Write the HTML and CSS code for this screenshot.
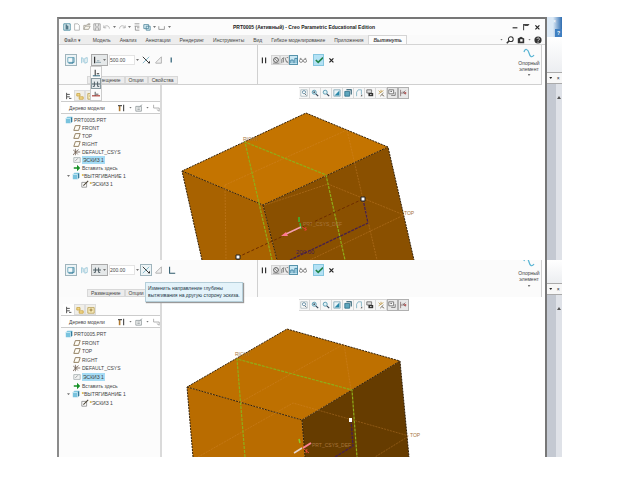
FILE: index.html
```html
<!DOCTYPE html>
<html lang="ru">
<head>
<meta charset="utf-8">
<title>Creo Parametric</title>
<link rel="stylesheet" href="styles.css">
</head>
<body>
<svg class="defs" aria-hidden="true">
  <symbol id="solid" viewBox="0 0 10 10"><path d="M1 2h8v6H1z" fill="#f4fafc" stroke="#5b9bb3"/><path d="M7.5 2v7H2" fill="none" stroke="#216f91"/></symbol>
  <symbol id="surface" viewBox="0 0 10 10"><path d="M2 2v7M2 2l2 1v5M6 3l3-1v6l-3 1z" fill="none" stroke="#8cc0d4"/></symbol>
  <symbol id="blind" viewBox="0 0 10 10"><path d="M2 1v8" stroke="#333" stroke-width="1.5"/><path d="M3 8h7M5 6h3" stroke="#7f9ba5"/></symbol>
  <symbol id="sym" viewBox="0 0 10 10"><path d="M0 5h10M3 2v6M7 2v6M1 8h2M7 8h2" fill="none" stroke="#4c5c63" stroke-width="1.2"/></symbol>
  <symbol id="onebase" viewBox="0 0 10 10"><path d="M1 8.500h9" stroke="#356f85" stroke-width="1.300"/><path d="M4 1v7M6 6h3" stroke="#333" stroke-width="1.300"/></symbol>
  <symbol id="tosel" viewBox="0 0 10 10"><path d="M0 6h10" stroke="#b0413a" stroke-width="1.500"/><path d="M4 1v5M5 4h3" stroke="#555" stroke-width="1.200"/></symbol>
  <symbol id="flip" viewBox="0 0 10 10"><path d="M1 1l8 8" stroke="#333" stroke-width="1.200"/><path d="M1 9l8-8" stroke="#6fa9bd"/><path d="M7 9h3V6z" fill="#333"/></symbol>
  <symbol id="cut" viewBox="0 0 10 10"><path d="M1 8L8 1v8H1z" fill="#f0f0f0" stroke="#a4a4a4"/></symbol>
  <symbol id="bar" viewBox="0 0 10 10"><path d="M4 2v6" stroke="#285c73" stroke-width="1.500"/></symbol>
  <symbol id="corner" viewBox="0 0 10 10"><path d="M2 1v8h7" fill="none" stroke="#2e596b" stroke-width="1.300"/></symbol>
  <symbol id="pause" viewBox="0 0 10 10"><path d="M3 2v7M7 2v7" stroke="#333" stroke-width="1.500"/></symbol>
  <symbol id="noprev" viewBox="0 0 10 10"><circle cx="5" cy="5" r="3" fill="none" stroke="#555" stroke-width="1.200"/><path d="M3 3l4 4M1 9h8" stroke="#777"/></symbol>
  <symbol id="hatch" viewBox="0 0 10 10"><path d="M1 9V4l2-2v6M5 2l2 6M7 2h2M7 6l2 3" fill="none" stroke="#777" stroke-width="1.100"/></symbol>
  <symbol id="attach" viewBox="0 0 10 10"><path d="M1 9V5h3v4M6 9V3h3v6" fill="#b8deee" stroke="#2b7698"/></symbol>
  <symbol id="glasses" viewBox="0 0 10 10"><circle cx="2.500" cy="6" r="2" fill="none" stroke="#777"/><circle cx="7.500" cy="6" r="2" fill="none" stroke="#777"/><path d="M1 3h2M7 3h2" stroke="#777"/></symbol>
  <symbol id="check" viewBox="0 0 10 10"><path d="M1 5l3 3 6-6" fill="none" stroke="#20844a" stroke-width="2"/></symbol>
  <symbol id="cross" viewBox="0 0 10 10"><path d="M3 3l5 5M8 3L3 8" stroke="#222" stroke-width="1.500"/></symbol>
  <symbol id="zoomfit" viewBox="0 0 10 10"><path d="M1 1h8v8H1z" fill="#fff" stroke="#a6b5bb"/><circle cx="5" cy="4" r="2" fill="none" stroke="#55839a"/><path d="M6 6l2 2" stroke="#555"/></symbol>
  <symbol id="zoomin" viewBox="0 0 10 10"><circle cx="4" cy="4" r="2.500" fill="#dff2f7" stroke="#438ca6"/><path d="M3 4h2M4 3v2" stroke="#234"/><path d="M6 6l3 3" stroke="#345" stroke-width="1.500"/></symbol>
  <symbol id="zoomout" viewBox="0 0 10 10"><circle cx="4" cy="4" r="2.500" fill="#dff2f7" stroke="#438ca6"/><path d="M6 6l3 3" stroke="#345" stroke-width="1.500"/></symbol>
  <symbol id="repaint" viewBox="0 0 10 10"><path d="M1 1h8v8H1z" fill="#e8f4f8" stroke="#7fa6b5"/><path d="M8 2v6H2z" fill="#2a87a8"/></symbol>
  <symbol id="shade" viewBox="0 0 10 10"><path d="M1 3h6v6H1z" fill="#5fa6bd" stroke="#276c86"/><path d="M3 1h6v6" fill="none" stroke="#174d63" stroke-width="1.300"/></symbol>
  <symbol id="saved" viewBox="0 0 10 10"><path d="M2 9V4l2-3h4v6" fill="none" stroke="#74aabd"/><path d="M7 9h2V7z" fill="#333"/></symbol>
  <symbol id="views" viewBox="0 0 10 10"><path d="M1 1h6v4H1z" fill="#ddd" stroke="#666"/><path d="M3 5h6v4H3z" fill="#333"/><path d="M5 7h2" stroke="#fff"/></symbol>
  <symbol id="datum" viewBox="0 0 10 10"><path d="M2 2l2 2M5 1v3M2 6l6-4" stroke="#bd953f"/><path d="M4 9l4-4M6 7l3 2" stroke="#655b49"/></symbol>
  <symbol id="annot" viewBox="0 0 10 10"><path d="M1 1h6v5H1zM4 8h5V4" fill="#f5f5f5" stroke="#666"/><path d="M3 3h2" stroke="#444"/></symbol>
  <symbol id="spin" viewBox="0 0 10 10"><path d="M2 1v8M2 5h6M5 3l3 4M8 2L5 5" fill="none" stroke="#806a6a"/><path d="M7 4h2v2H7z" fill="#b44"/></symbol>
  <symbol id="part" viewBox="0 0 10 10"><path d="M1 3l2-2h6v6L7 9H1z" fill="#79c3de"/><path d="M7 3l2-2v6L7 9z" fill="#286f90"/><path d="M1 3h6v6" fill="none" stroke="#d8f2fa"/></symbol>
  <symbol id="plane" viewBox="0 0 10 10"><path d="M3 2h6L7 8H1z" fill="#fffdf6" stroke="#7c6642"/></symbol>
  <symbol id="csys" viewBox="0 0 10 10"><path d="M3 1v8M3 5h6M0 2l6 6M0 9l3-4 4-3" fill="none" stroke="#705e50"/></symbol>
  <symbol id="sketch" viewBox="0 0 10 10"><path d="M1 2h8v6H1z" fill="#f2f4f4" stroke="#a5adaf"/><path d="M3 6l3-3" stroke="#888"/></symbol>
  <symbol id="insert" viewBox="0 0 10 10"><path d="M1 4h4V1l4 4-4 4V6H1z" fill="#159025"/></symbol>
  <symbol id="pencil" viewBox="0 0 10 10"><path d="M1 3h6v6H1z" fill="#fff" stroke="#888"/><path d="M3 7l6-6" stroke="#4a4233" stroke-width="1.300"/></symbol>
  <symbol id="tree" viewBox="0 0 10 10"><path d="M2 1v8M2 3h4M2 6h4M5 8h3" fill="none" stroke="#555" stroke-width="1.200"/></symbol>
  <symbol id="folder" viewBox="0 0 10 10"><path d="M1 2h4v3H1zM4 6h5v3H4z" fill="#f5dc8b" stroke="#c5a042"/></symbol>
  <symbol id="star" viewBox="0 0 10 10"><path d="M1 2h8v7H1z" fill="#f9edbd" stroke="#b59c55"/><path d="M5 3v4M3 5h4" stroke="#8d702b"/></symbol>
  <symbol id="tools" viewBox="0 0 10 10"><path d="M2 2v7" stroke="#b07a31" stroke-width="2"/><path d="M0 2h5M7 1v8" stroke="#555" stroke-width="1.500"/></symbol>
  <symbol id="list" viewBox="0 0 10 10"><path d="M1 3h7v6H1zM3 5h3M3 7h3M6 3l3-2" fill="#f3f5f5" stroke="#8f9799"/></symbol>
  <symbol id="filter" viewBox="0 0 10 10"><path d="M2 1v4h3M5 5h4v4M6 7l3 2" fill="none" stroke="#a0a0a0"/></symbol>
  <symbol id="page" viewBox="0 0 10 10"><path d="M2 1h4l2 2v6H2z" fill="#fff" stroke="#aaa"/></symbol>
  <symbol id="open" viewBox="0 0 10 10"><path d="M1 8V3h3l1-1h4M1 8h6l2-4H3zM6 1h3" fill="#f7f3e8" stroke="#9e9a90"/></symbol>
  <symbol id="save" viewBox="0 0 10 10"><path d="M1 1h8v8H1zM3 1v3h4V1M3 9V6h4v3" fill="#f4f4f4" stroke="#999"/></symbol>
  <symbol id="undo" viewBox="0 0 10 10"><path d="M1 3v3h3M1 6c2-4 7-3 7 1" fill="none" stroke="#aaa"/></symbol>
  <symbol id="redo" viewBox="0 0 10 10"><path d="M9 3v3H6M9 6C7 2 2 3 2 7" fill="none" stroke="#aaa"/></symbol>
  <symbol id="regen" viewBox="0 0 10 10"><path d="M2 1h6M2 4h6M3 4v5h5M5 6h3" fill="none" stroke="#888"/></symbol>
  <symbol id="windows" viewBox="0 0 10 10"><path d="M1 2h6v5H1zM4 4h5v5H4z" fill="#d8eef5" stroke="#50859a"/></symbol>
  <symbol id="box" viewBox="0 0 10 10"><path d="M1 4v4h7V4" fill="none" stroke="#888"/></symbol>
  <symbol id="min" viewBox="0 0 10 10"><path d="M2 6h6" stroke="#333" stroke-width="1.500"/></symbol>
  <symbol id="max" viewBox="0 0 10 10"><path d="M2 9V2h7M3 3h5" fill="none" stroke="#444" stroke-width="1.300"/></symbol>
  <symbol id="search" viewBox="0 0 10 10"><circle cx="6" cy="4" r="3" fill="#fff" stroke="#333" stroke-width="1.300"/><path d="M4 6L1 9" stroke="#333" stroke-width="2"/></symbol>
  <symbol id="learn" viewBox="0 0 10 10"><path d="M1 3l4-2 4 2v6H1z" fill="#333"/><path d="M4 4h3v3H4z" fill="#fff"/></symbol>
  <symbol id="help" viewBox="0 0 10 10"><circle cx="5" cy="5" r="4.500" fill="#333"/><path d="M3.500 3.500c1-2 4-1 3 1L5 6M5 7v1.500" fill="none" stroke="#fff"/></symbol>
  <symbol id="logo" viewBox="0 0 10 10"><path d="M1 1h8v8H1z" fill="#eef8fa" stroke="#357d96"/><path d="M4 2v6M6 3v5" stroke="#2a596b" stroke-width="1.500"/></symbol>
</svg>
<main class="stage">
  <section class="capture">
    <div class="app app-top">
      <header class="titlebar">
        <svg class="ic"><use href="#logo"/></svg>
        <svg class="ic"><use href="#page"/></svg>
        <svg class="ic"><use href="#open"/></svg>
        <svg class="ic"><use href="#save"/></svg>
        <svg class="ic"><use href="#undo"/></svg><i class="caret"></i>
        <svg class="ic"><use href="#redo"/></svg><i class="caret"></i>
        <svg class="ic"><use href="#regen"/></svg>
        <svg class="ic"><use href="#windows"/></svg><i class="caret"></i>
        <svg class="ic"><use href="#box"/></svg><i class="caret"></i>
        <h1>PRT0005 (Активный) - Creo Parametric Educational Edition</h1>
        <div class="winbtns">
          <button aria-label="Свернуть"><svg class="ic"><use href="#min"/></svg></button>
          <button aria-label="Развернуть"><svg class="ic"><use href="#max"/></svg></button>
          <button aria-label="Закрыть"><svg class="ic"><use href="#cross"/></svg></button>
        </div>
      </header>
      <nav class="tabs">
        <a href="#" class="file">Файл ▾</a><a href="#">Модель</a><a href="#">Анализ</a><a href="#">Аннотации</a><a href="#">Рендеринг</a><a href="#">Инструменты</a><a href="#">Вид</a><a href="#">Гибкое моделирование</a><a href="#">Приложения</a><a href="#" class="active">Вытянуть</a>
        <div class="helpers">
          <i class="caret"></i>
          <svg class="ic"><use href="#search"/></svg>
          <svg class="ic"><use href="#learn"/></svg>
          <i class="caret"></i>
          <svg class="ic"><use href="#help"/></svg>
        </div>
      </nav>
      <div class="ribbon">
        <div class="settings">
          <div class="row">
            <button class="tool on" aria-label="Твердое тело"><svg class="ic"><use href="#solid"/></svg></button>
            <button class="tool" aria-label="Поверхность"><svg class="ic"><use href="#surface"/></svg></button>
            <button class="depth" aria-label="Глубина"><svg class="ic"><use href="#blind"/></svg><i class="caret"></i></button>
            <input class="value" aria-label="Значение глубины" value="500.00">
            <i class="caret"></i>
            <button class="tool" aria-label="Изменить направление"><svg class="ic"><use href="#flip"/></svg></button>
            <button class="tool" aria-label="Удалить материал"><svg class="ic"><use href="#cut"/></svg></button>
            <button class="tool" aria-label="Утолстить"><svg class="ic"><use href="#bar"/></svg></button>
            <div class="flyout">
              <button aria-label="На глубину"><svg class="ic"><use href="#onebase"/></svg></button>
              <button class="on" aria-label="Симметрично"><svg class="ic"><use href="#sym"/></svg></button>
              <button aria-label="До выбранного"><svg class="ic"><use href="#tosel"/></svg></button>
            </div>
          </div>
          <div class="panels"><button>Размещение</button><button>Опции</button><button>Свойства</button></div>
        </div>
        <div class="confirm">
          <button class="tool" aria-label="Пауза"><svg class="ic"><use href="#pause"/></svg></button>
          <div class="group">
            <button class="view" aria-label="Без просмотра"><svg class="ic"><use href="#noprev"/></svg></button>
            <button class="view" aria-label="Отдельно"><svg class="ic"><use href="#hatch"/></svg></button>
            <button class="view on" aria-label="Присоединено"><svg class="ic"><use href="#attach"/></svg></button>
            <button class="view plain" aria-label="Проверка"><svg class="ic"><use href="#glasses"/></svg></button>
          </div>
          <button class="ok" aria-label="Принять"><svg class="ic"><use href="#check"/></svg></button>
          <button class="tool" aria-label="Отмена"><svg class="ic"><use href="#cross"/></svg></button>
        </div>
        <button class="datum"><svg class="wave" viewBox="0 0 12 10"><path d="M1 4c1-4 4-3 5 1s3 5 5 2" fill="none" stroke="#58b4d3" stroke-width="1.200"/></svg><span>Опорный<br>элемент</span><i class="caret"></i></button>
      </div>
      <div class="work">
        <aside class="side">
          <div class="sidetabs"><button class="on" aria-label="Дерево"><svg class="ic"><use href="#tree"/></svg></button><button aria-label="Папки"><svg class="ic"><use href="#folder"/></svg></button><button aria-label="Избранное"><svg class="ic"><use href="#star"/></svg></button></div>
          <div class="treehead"><span>Дерево модели</span><svg class="ic"><use href="#tools"/></svg><i class="caret"></i><svg class="ic"><use href="#list"/></svg><i class="caret"></i><svg class="ic"><use href="#filter"/></svg></div>
          <ul class="tree">
            <li class="root"><svg class="ic"><use href="#part"/></svg><span>PRT0005.PRT</span></li>
            <li><svg class="ic"><use href="#plane"/></svg><span>FRONT</span></li>
            <li><svg class="ic"><use href="#plane"/></svg><span>TOP</span></li>
            <li><svg class="ic"><use href="#plane"/></svg><span>RIGHT</span></li>
            <li><svg class="ic"><use href="#csys"/></svg><span>DEFAULT_CSYS</span></li>
            <li><svg class="ic"><use href="#sketch"/></svg><span class="sel">ЭСКИЗ 1</span></li>
            <li><svg class="ic"><use href="#insert"/></svg><span>Вставить здесь</span></li>
            <li class="parent"><i class="caret"></i><svg class="ic"><use href="#part"/></svg><span><b>*</b>ВЫТЯГИВАНИЕ 1</span></li>
            <li class="leaf"><svg class="ic"><use href="#pencil"/></svg><span><b>*</b>ЭСКИЗ 1</span></li>
          </ul>
        </aside>
        <div class="canvas">
          <div class="viewbar">
            <button aria-label="Вписать"><svg class="ic"><use href="#zoomfit"/></svg></button><button aria-label="Увеличить"><svg class="ic"><use href="#zoomin"/></svg></button><button aria-label="Уменьшить"><svg class="ic"><use href="#zoomout"/></svg></button><button aria-label="Перерисовать"><svg class="ic"><use href="#repaint"/></svg></button><button aria-label="Стиль"><svg class="ic"><use href="#shade"/></svg></button><button aria-label="Ориентации"><svg class="ic"><use href="#saved"/></svg></button><button aria-label="Виды"><svg class="ic"><use href="#views"/></svg></button><button aria-label="Опорные элементы"><svg class="ic"><use href="#datum"/></svg></button><button class="on" aria-label="Аннотации"><svg class="ic"><use href="#annot"/></svg></button><button class="on" aria-label="Вращение"><svg class="ic"><use href="#spin"/></svg></button>
          </div>
          <svg class="model" viewBox="162 100 383 160">
            <path d="M182 171L263 205 277 260H202z" fill="#a86200"/>
            <path d="M263 205L388 147 414 260H277z" fill="#8a5000"/>
            <path d="M306 113L388 147 263 205 182 171z" fill="#c47400"/>
            <g class="edge"><path d="M202 260L182 171 306 113 388 147 414 260M182 171L263 205 388 147M263 205L277 260"/></g>
            <g class="faint"><path d="M225 185L347 130 377 260M225 185L226 260M265 205L328 184 404 215 310 260"/></g>
            <g class="green"><path d="M272 260L245 142 326 175 345 260"/></g>
            <path class="reddash" d="M363 199L238 257"/>
            <path class="purple" d="M363 199L368 223 290 260"/>
            <path d="M299 217v5M300 223l1 6" stroke="#38b935" stroke-width="1.500"/>
            <path d="M301 227L286 234" stroke="#f4a0ae" stroke-width="1.500"/><path d="M281 236l5-4 2 4z" fill="#ff7890"/>
            <path d="M302 227l5 3M305 231l1-4" stroke="#d8432f"/>
            <path d="M361 197h4v4h-4zM236 255h4v4h-4z" fill="#fff" stroke="#222"/>
            <path d="M238 259v1" stroke="#222"/>
            <text x="303" y="226" class="lb">PRT_CSYS_DEF</text>
            <text x="296" y="254" class="dim">200.00</text>
            <text x="243" y="141" class="lb">RIGHT</text>
            <text x="404" y="215" class="lb">TOP</text>
          </svg>
        </div>
      </div>
    </div>
    <div class="strip" aria-hidden="true">
      <div class="glass"><span>×</span><b>?</b></div>
      <div class="blank"></div>
      <div class="mini"><i class="caret"></i><span>×</span></div>
      <div class="scroll"><i class="up"></i></div>
    </div>
  </section>

  <section class="capture">
    <div class="app">
      <div class="ribbon short">
        <div class="settings">
          <div class="row">
            <button class="tool on" aria-label="Твердое тело"><svg class="ic"><use href="#solid"/></svg></button>
            <button class="tool" aria-label="Поверхность"><svg class="ic"><use href="#surface"/></svg></button>
            <button class="depth" aria-label="Глубина"><svg class="ic"><use href="#sym"/></svg><i class="caret"></i></button>
            <input class="value" aria-label="Значение глубины" value="200.00">
            <i class="caret"></i>
            <button class="tool on" aria-label="Изменить направление"><svg class="ic"><use href="#flip"/></svg></button>
            <button class="tool" aria-label="Удалить материал"><svg class="ic"><use href="#cut"/></svg></button>
            <button class="tool" aria-label="Утолстить"><svg class="ic"><use href="#corner"/></svg></button>
          </div>
          <div class="panels"><button>Размещение</button><button>Опции</button></div>
          <div class="tooltip" role="tooltip">Изменить направление глубины<br>вытягивания на другую сторону эскиза.</div>
        </div>
        <div class="confirm">
          <button class="tool" aria-label="Пауза"><svg class="ic"><use href="#pause"/></svg></button>
          <div class="group">
            <button class="view" aria-label="Без просмотра"><svg class="ic"><use href="#noprev"/></svg></button>
            <button class="view" aria-label="Отдельно"><svg class="ic"><use href="#hatch"/></svg></button>
            <button class="view on" aria-label="Присоединено"><svg class="ic"><use href="#attach"/></svg></button>
            <button class="view plain" aria-label="Проверка"><svg class="ic"><use href="#glasses"/></svg></button>
          </div>
          <button class="ok" aria-label="Принять"><svg class="ic"><use href="#check"/></svg></button>
          <button class="tool" aria-label="Отмена"><svg class="ic"><use href="#cross"/></svg></button>
        </div>
        <button class="datum"><svg class="wave clip" viewBox="0 3 12 7"><path d="M1 4c1-4 4-3 5 1s3 5 5 2" fill="none" stroke="#58b4d3" stroke-width="1.200"/></svg><span>Опорный<br>элемент</span><i class="caret"></i></button>
      </div>
      <div class="work">
        <aside class="side">
          <div class="sidetabs"><button class="on" aria-label="Дерево"><svg class="ic"><use href="#tree"/></svg></button><button aria-label="Папки"><svg class="ic"><use href="#folder"/></svg></button><button aria-label="Избранное"><svg class="ic"><use href="#star"/></svg></button></div>
          <div class="treehead"><span>Дерево модели</span><svg class="ic"><use href="#tools"/></svg><i class="caret"></i><svg class="ic"><use href="#list"/></svg><i class="caret"></i><svg class="ic"><use href="#filter"/></svg></div>
          <ul class="tree">
            <li class="root"><svg class="ic"><use href="#part"/></svg><span>PRT0005.PRT</span></li>
            <li><svg class="ic"><use href="#plane"/></svg><span>FRONT</span></li>
            <li><svg class="ic"><use href="#plane"/></svg><span>TOP</span></li>
            <li><svg class="ic"><use href="#plane"/></svg><span>RIGHT</span></li>
            <li><svg class="ic"><use href="#csys"/></svg><span>DEFAULT_CSYS</span></li>
            <li><svg class="ic"><use href="#sketch"/></svg><span class="sel">ЭСКИЗ 1</span></li>
            <li><svg class="ic"><use href="#insert"/></svg><span>Вставить здесь</span></li>
            <li class="parent"><i class="caret"></i><svg class="ic"><use href="#part"/></svg><span><b>*</b>ВЫТЯГИВАНИЕ 1</span></li>
            <li class="leaf"><svg class="ic"><use href="#pencil"/></svg><span><b>*</b>ЭСКИЗ 1</span></li>
          </ul>
        </aside>
        <div class="canvas">
          <div class="viewbar">
            <button aria-label="Вписать"><svg class="ic"><use href="#zoomfit"/></svg></button><button aria-label="Увеличить"><svg class="ic"><use href="#zoomin"/></svg></button><button aria-label="Уменьшить"><svg class="ic"><use href="#zoomout"/></svg></button><button aria-label="Перерисовать"><svg class="ic"><use href="#repaint"/></svg></button><button aria-label="Стиль"><svg class="ic"><use href="#shade"/></svg></button><button aria-label="Ориентации"><svg class="ic"><use href="#saved"/></svg></button><button aria-label="Виды"><svg class="ic"><use href="#views"/></svg></button><button aria-label="Опорные элементы"><svg class="ic"><use href="#datum"/></svg></button><button class="on" aria-label="Аннотации"><svg class="ic"><use href="#annot"/></svg></button><button class="on" aria-label="Вращение"><svg class="ic"><use href="#spin"/></svg></button>
          </div>
          <svg class="model" viewBox="162 312 383 146">
            <path d="M187 388L302 421 305 458H193z" fill="#b96c00"/>
            <path d="M302 421L400 362 409 458H305z" fill="#663c00"/>
            <path d="M287 330L400 362 302 421 187 388z" fill="#be7000"/>
            <g class="edge"><path d="M193 458L187 388 287 330 400 362 409 458M187 388L302 421 400 362M302 421L305 458"/></g>
            <g class="faint"><path d="M241 403L344 345 351 391M198 458L293 404 409 437 375 458"/></g>
            <g class="green"><path d="M245 458L237 360 352 391 357 458"/></g>
            <path class="purple" d="M351 421L353 447 335 458"/>
            <path d="M299 440l1 4" stroke="#8cc92a" stroke-width="1.500"/>
            <path d="M311 444L303 449" stroke="#ff8296" stroke-width="2"/>
            <path d="M302 449L294 454" stroke="#e5d5cf" stroke-width="1.500"/>
            <path d="M304 450l5 4M306 454l1-4" stroke="#e04a36"/>
            <path d="M349 419h3v4h-3z" fill="#fff"/>
            <text x="312" y="448" class="lb">PRT_CSYS_DEF</text>
            <text x="235" y="357" class="lb">RIGHT</text>
            <text x="410" y="438" class="lb">TOP</text>
          </svg>
        </div>
      </div>
    </div>
    <div class="strip" aria-hidden="true">
      <div class="blank low"></div>
      <div class="mini"><i class="caret"></i><span>×</span></div>
      <div class="scroll"><i class="up"></i></div>
    </div>
  </section>
</main>
</body>
</html>
```
FILE: styles.css
```css
* { box-sizing: border-box; }
body {
  margin: 0;
  background: #fff;
  color: #444;
  font: 5px/8px "Liberation Sans", Arial, sans-serif;
}
button, input { font: inherit; color: inherit; border: 0; padding: 0; margin: 0; background: none; }
button { display: flex; align-items: center; justify-content: center; }
a { color: inherit; text-decoration: none; }
.defs { display: none; }
.ic { display: block; width: 8px; height: 8px; flex: none; }
.caret {
  flex: none;
  width: 3px;
  height: 2px;
  background: #777;
  clip-path: polygon(0 0, 100% 0, 50% 100%);
}

.stage { padding: 17px 78px 22px 57px; }
.capture { display: grid; grid-template-columns: 1fr 15px; }
.app { border-left: 2px solid #8b8b8b; border-right: 2px solid #777; min-width: 0; }
.app-top { border-top: 2px solid #777; }

.titlebar { display: flex; align-items: center; gap: 2px; height: 16px; padding: 0 4px; background: #fcfcfc; }
.titlebar h1 { margin: 0 auto 0 60px; font-size: 5px; font-weight: bold; color: #222; white-space: nowrap; }
.winbtns { display: flex; gap: 3px; }

.tabs { display: flex; align-items: stretch; height: 10px; padding-left: 1px; background: #fafafa; border-bottom: 1px solid #d4d4d4; white-space: nowrap; }
.tabs a { padding: 1px 5px 0 4px; background: #ededed; }
.tabs .file { padding-right: 8px; }
.tabs .active { background: #fcfcfc; border: 1px solid #d4d4d4; border-bottom: 0; padding: 0 4px; font-style: italic; font-weight: bold; }
.helpers { display: flex; align-items: center; gap: 3px; margin-left: auto; padding-right: 3px; }

.ribbon { display: grid; grid-template-columns: 199px 1fr 24px; height: 40px; margin-right: 3px; background: #fbfbfb; border: solid #d0d0d0; border-width: 0 1px 1px 0; }
.settings { position: relative; display: flex; flex-direction: column; justify-content: space-between; padding-top: 9px; border-right: 1px solid #d0d0d0; }
.row { position: relative; display: flex; align-items: center; gap: 1px; height: 12px; padding-left: 6px; }
.tool { width: 12px; height: 12px; }
.tool.on { background: #edf4f6; border: 1px solid #9fb4bc; }
.depth { width: 17px; height: 12px; gap: 2px; background: #e5e8e9; border: 1px solid #aaa; }
.value { width: 26px; height: 10px; background: #fff; border: 1px solid #e4e4e4; }
.flyout { position: absolute; left: 31px; top: 12px; z-index: 2; width: 12px; background: #fcfcfc; border: 1px solid #ccc; }
.flyout button { width: 10px; height: 11px; }
.flyout .on { background: #e6ebed; border: 1px solid #8a9aa0; }
.panels { display: flex; padding-left: 28px; }
.panels button { height: 8px; padding: 0 3px; background: #ececec; border: 1px solid #d8d8d8; }

.confirm { display: flex; align-items: flex-start; gap: 1px; padding-top: 9px; }
.group { display: flex; }
.view { width: 9px; height: 10px; margin-top: 1px; background: #ececec; border: 1px solid #d5d5d5; }
.view.on { background: #cce8f3; border-color: #5793ab; }
.view.plain { background: none; border-color: transparent; }
.ok { width: 11px; height: 12px; margin-left: 5px; background: #b4e2f5; border: 1px solid #86c6df; }
.datum { flex-direction: column; justify-content: flex-start; gap: 2px; padding-top: 3px; line-height: 6px; }
.wave { width: 12px; height: 10px; }
.wave.clip { height: 7px; }

.short { height: 37px; border-bottom: 0; }
.short .settings, .short .confirm { padding-top: 4px; }
.short .datum { padding-top: 0; gap: 3px; }
.tooltip {
  position: absolute;
  left: 86px;
  top: 22px;
  z-index: 3;
  padding: 2px;
  line-height: 7px;
  white-space: nowrap;
  color: #234;
  background: #e4f3fa;
  border: 1px solid #b5ced9;
  box-shadow: 1px 1px 1px #999;
}

.work { display: grid; grid-template-columns: 103px 1fr; }
.side { background: #fcfcfc; border-right: 2px solid #dadada; }
.sidetabs { display: flex; height: 16px; padding: 5px 0 0 4px; }
.sidetabs button { width: 11px; background: #f1efe8; border: 1px solid #ddd; }
.sidetabs .on { background: #fff; border-color: transparent; }
.treehead { display: flex; align-items: center; gap: 3px; height: 13px; margin-left: 2px; padding-left: 8px; border: solid #ccc; border-width: 1px 0; background: #fff; }
.treehead span { margin-right: auto; }
.tree { display: grid; grid-auto-rows: 1fr; height: 72px; margin: 2px 0 0; padding: 0; list-style: none; white-space: nowrap; }
.tree li { display: flex; align-items: center; gap: 1px; padding-left: 14px; }
.tree .root { padding-left: 6px; }
.tree .parent { padding-left: 8px; gap: 2px; }
.tree .leaf { padding-left: 22px; }
.tree .sel { padding: 0 1px; background: #a5dcf5; }
.tree b { color: #b49300; }

.canvas { min-width: 0; padding-top: 2px; background: #fff; }
.viewbar { display: flex; width: max-content; height: 12px; margin: 0 auto; background: #f7f7f7; }
.viewbar button { width: 11px; border: 1px solid #d8d8d8; border-left-width: 0; }
.viewbar .on { background: #e8e8e8; border: 1px solid #b0b0b0; }
.model { display: block; width: 100%; margin-top: 1px; }
.short + .work .side { padding-top: 2px; }
.short + .work .tree { height: 77px; }
.short + .work .model { margin-top: 0; }
.edge { fill: none; stroke: #33210a; stroke-dasharray: 2 1; }
.faint { fill: none; stroke: #d88c3c; stroke-opacity: .35; stroke-dasharray: 2 1; }
.green { fill: none; stroke: #8fae18; stroke-width: 1.2px; stroke-dasharray: 3 1; }
.purple { fill: none; stroke: #46204c; stroke-width: 1.3px; stroke-dasharray: 3 1; }
.reddash { fill: none; stroke: #6d2c00; stroke-dasharray: 3 2; }
.lb { font-size: 5px; fill: #a8763c; }
.dim { font-size: 6px; fill: #46204c; }

.strip { display: flex; flex-direction: column; background: #f4f5f7; }
.glass { display: flex; flex-direction: column; align-items: center; justify-content: space-between; height: 20px; background: linear-gradient(90deg, #dbe9f6 40%, #2f6db0); color: #fff; }
.glass b { align-self: flex-end; padding: 0 2px; background: #3f7fc1; }
.blank { height: 36px; background: linear-gradient(#fff, #eceef1); border-bottom: 1px solid #aaa; }
.blank.low { height: 24px; }
.mini { display: flex; align-items: center; justify-content: space-around; height: 11px; color: #222; background: #f7f7f7; border-bottom: 1px solid #aaa; }
.mini .caret { background: #222; }
.scroll { flex: 1; padding: 12px 0 0 10px; background: linear-gradient(90deg, #c4c9d2 60%, #dfe2e8 60%); }
.up { display: block; width: 4px; height: 3px; background: #555; clip-path: polygon(50% 0, 100% 100%, 0 100%); }
```
